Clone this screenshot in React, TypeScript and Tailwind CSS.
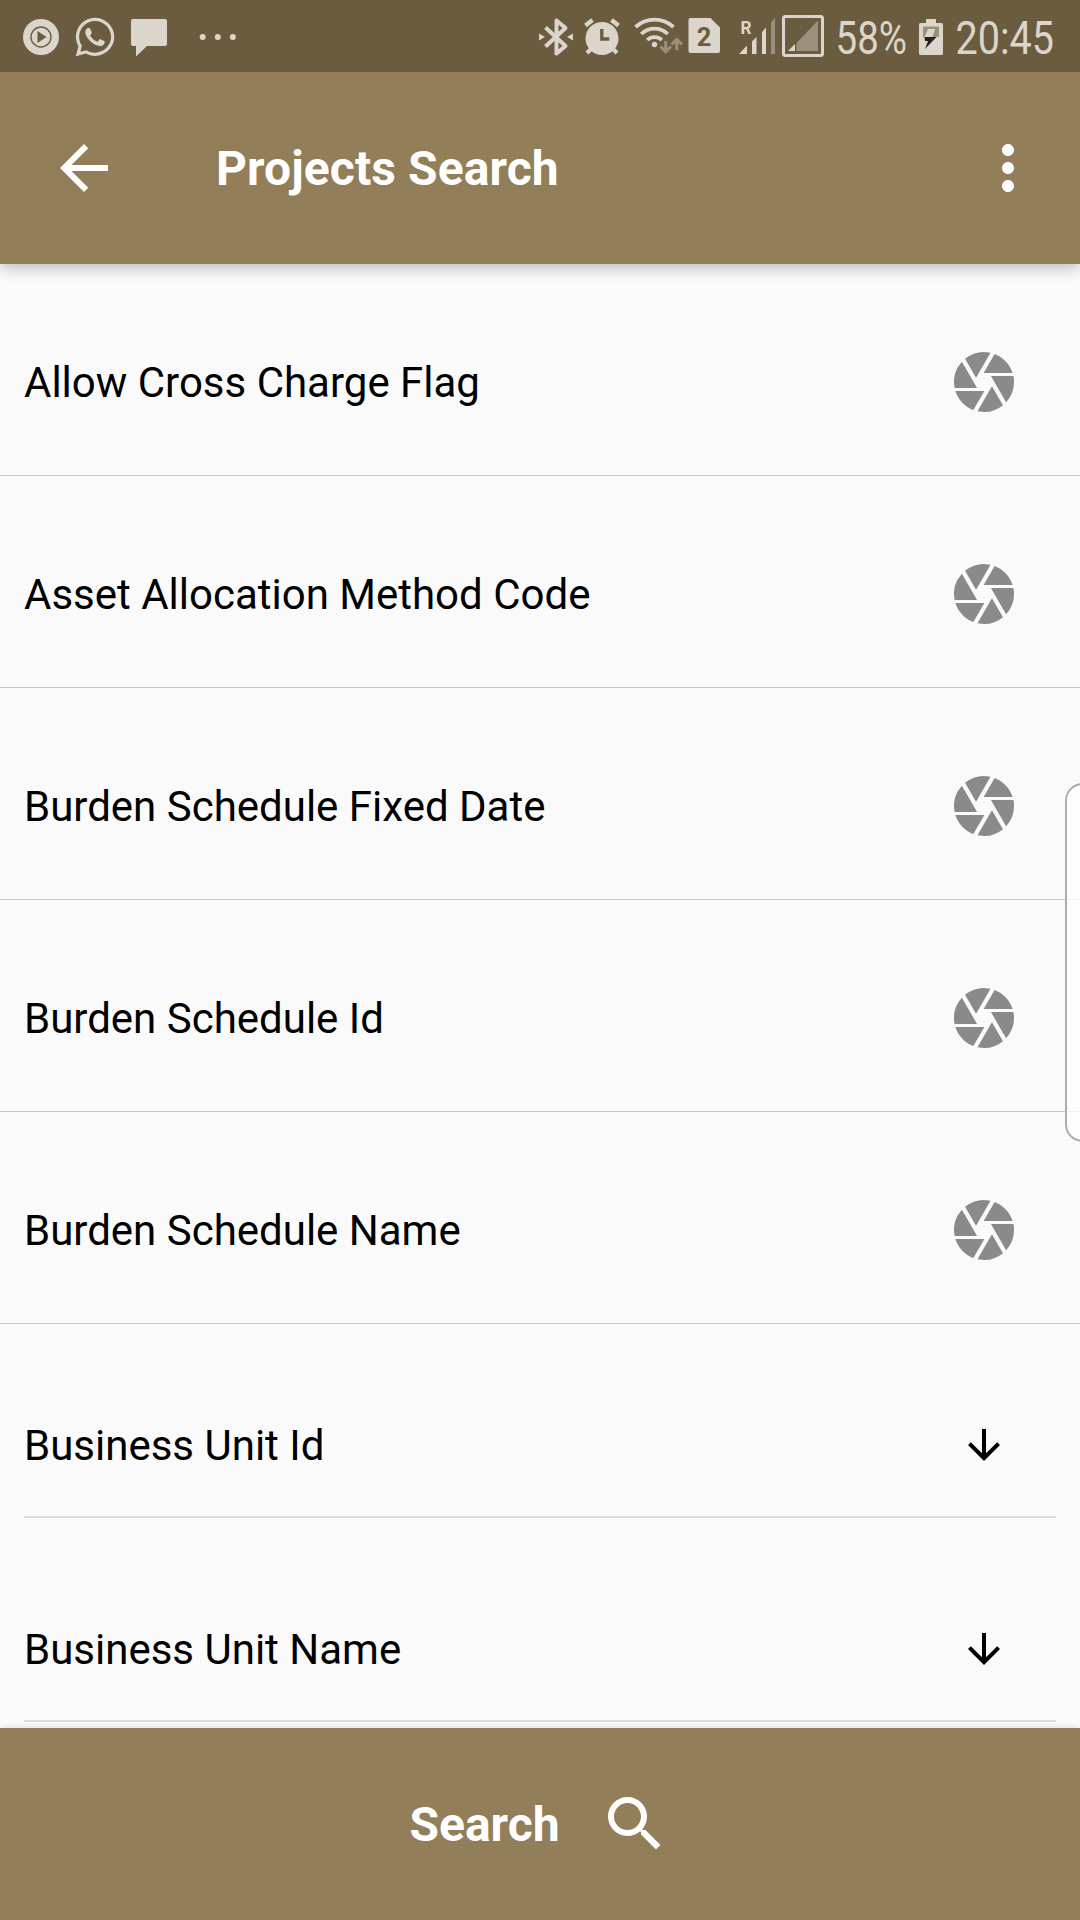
import type { ReactNode } from "react";
import { FaWhatsapp } from "react-icons/fa";
import { MdArrowBack, MdArrowDownward, MdCamera, MdMoreVert, MdSearch } from "react-icons/md";

const LOOKUP_FIELDS = [
  "Allow Cross Charge Flag",
  "Asset Allocation Method Code",
  "Burden Schedule Fixed Date",
  "Burden Schedule Id",
  "Burden Schedule Name",
];

const DROPDOWN_FIELDS = ["Business Unit Id", "Business Unit Name"];

// Full-height slot of the status bar; x is the slot's offset in the bar's drawing space.
function Glyph({ x, w, children }: { x: number; w: number; children: ReactNode }) {
  return (
    <svg width={w} height={72} viewBox={`${x} 0 ${w} 72`} fill="currentColor" className="block shrink-0 overflow-visible">
      {children}
    </svg>
  );
}

function StatusBar() {
  return (
    <div className="relative z-20 flex h-[72px] shrink-0 items-center justify-between bg-[#6b5c3f] pl-[20px] pr-[20px] text-[#dbd5cb]">
      <div className="flex items-center">
        <Glyph x={20} w={55}>
          <circle cx="41" cy="37" r="18" />
          <circle cx="41" cy="37" r="10" fill="none" stroke="#6b5c3f" strokeWidth="1.4" />
          <path d="M37.5 31v12l9-6z" fill="#6b5c3f" />
        </Glyph>
        <FaWhatsapp className="mt-[2px] h-[44px] w-[40px] shrink-0" />
        <Glyph x={115} w={130}>
          <path d="M133 19h32a2 2 0 0 1 2 2v23a2 2 0 0 1-2 2h-18l-11 10.500v-10.500h-3a2 2 0 0 1-2-2V21a2 2 0 0 1 2-2z" />
          <circle cx="202.700" cy="37" r="3" />
          <circle cx="217.800" cy="37" r="3" />
          <circle cx="232.800" cy="37" r="3" />
        </Glyph>
      </div>
      <div className="flex items-center">
        <Glyph x={536} w={44}>
          <path d="M545.500 27.500L565.500 46L556.500 53.500V20.500L565.500 28L545.500 46.500" fill="none" stroke="currentColor" strokeWidth="4" strokeLinejoin="round" />
          <path d="M539 33.500l6 3.500-6 3.500zM573 33.500l-6 3.500 6 3.500z" />
        </Glyph>
        <Glyph x={580} w={50}>
          <circle cx="602" cy="38.500" r="16.500" />
          <path d="M585.500 25.500l7-5.500M618.500 25.500l-7-5.500" stroke="currentColor" strokeWidth="4.200" />
          <path d="M592 48l-5 5M612 48l5 5" stroke="currentColor" strokeWidth="4.200" />
          <path d="M601.800 29v10h7.500" fill="none" stroke="#6b5c3f" strokeWidth="3.300" />
        </Glyph>
        <Glyph x={630} w={56}>
          <g fill="none" stroke="currentColor" strokeWidth="3.800">
            <path d="M635.500 27a28 28 0 0 1 38 0" />
            <path d="M641.300 34a19 19 0 0 1 26.400 0" />
            <path d="M647.200 40a10.500 10.500 0 0 1 14.600 0" />
          </g>
          <circle cx="654.500" cy="44.500" r="2.700" />
          <path d="M665.700 41v10M660.500 46.500l5.200 5.200 5.200-5.200M676.800 50V40M671.600 44.500l5.200-5.200 5.200 5.200" fill="none" stroke="#9b907b" strokeWidth="3" />
        </Glyph>
        <Glyph x={686} w={44}>
          <path d="M690.500 18h20l9.500 9.500v23.500a2 2 0 0 1-2 2h-27.500a2 2 0 0 1-2-2V20a2 2 0 0 1 2-2z" />
          <text x="704" y="46" textAnchor="middle" fontFamily="Roboto" fontWeight="700" fontSize="25.500" fill="#6b5c3f">2</text>
        </Glyph>
        <Glyph x={730} w={50}>
          <text x="740.500" y="34" fontFamily="Roboto" fontWeight="700" fontSize="18" textLength="11" lengthAdjust="spacingAndGlyphs">R</text>
          <path d="M739 54l8-8.500v8.500zM752 54V41.500l4.500-4.500v17zM762 54V32l4-4.500v26.500z" />
          <path d="M771 54V22.500l4-4.500v36z" fill="#9b907b" />
        </Glyph>
        <Glyph x={780} w={50}>
          <rect x="783.500" y="16.500" width="39" height="39" rx="2" fill="none" stroke="currentColor" strokeWidth="3" />
          <path d="M796.500 51V43l21.500-22.500v30.500z" fill="#9b907b" />
          <path d="M788 51l7-7v7z" />
        </Glyph>
        <Glyph x={830} w={84}>
          <text x="835.500" y="54" fontFamily="Roboto" fontSize="45.500" textLength="71.500" lengthAdjust="spacingAndGlyphs">58%</text>
        </Glyph>
        <Glyph x={914} w={36}>
          <path d="M926 19h10v4h5.500a1.500 1.500 0 0 1 1.500 1.500v29a1.500 1.500 0 0 1-1.500 1.500h-21a1.500 1.500 0 0 1-1.500-1.500v-29a1.500 1.500 0 0 1 1.500-1.500h5.500z" />
          <path d="M923 26.500h16v10.500h-16z" fill="#9b907b" />
          <path d="M928 29h7l-2.500 8h-8z" />
          <path d="M924.500 37h12l-11.500 12 3-8h-3z" fill="#231f20" />
        </Glyph>
        <Glyph x={950} w={110}>
          <text x="955.500" y="54" fontFamily="Roboto" fontSize="45.500" textLength="98.500" lengthAdjust="spacingAndGlyphs">20:45</text>
        </Glyph>
      </div>
    </div>
  );
}

function Header() {
  return (
    <header className="relative z-10 flex h-[192px] shrink-0 items-center bg-[#927e58] pl-12 pr-9 text-white shadow-[0_4px_14px_rgba(0,0,0,0.26)]">
      <MdArrowBack className="size-[72px]" />
      <h1 className="ml-24 flex-1 pt-[2px] text-[48px] leading-[56px] font-bold tracking-[0.1px]">Projects Search</h1>
      <MdMoreVert className="size-[72px]" />
    </header>
  );
}

export default function App() {
  return (
    <div className="relative flex h-[1920px] w-[1080px] flex-col overflow-hidden bg-[#fafafa] font-['Roboto',sans-serif]">
      <StatusBar />
      <Header />
      <main className="flex flex-1 flex-col text-[42px] leading-[50px] text-black">
        {LOOKUP_FIELDS.map((label) => (
          <div key={label} className="flex h-[212px] items-center justify-between border-b border-[#c0c8cc] pt-6 pr-[60px] pl-6">
            <span className="pt-[2px]">{label}</span>
            <MdCamera className="size-[72px] text-[#8a8a8a]" />
          </div>
        ))}
        <div className="-mt-[10px] px-6">
          {DROPDOWN_FIELDS.map((label) => (
            <div key={label} className="flex h-[204px] items-end justify-between border-b-2 border-[#d6dce0] pr-12 pb-[45px]">
              <span>{label}</span>
              <MdArrowDownward className="mb-[2px] size-12" />
            </div>
          ))}
        </div>
      </main>
      <footer className="flex h-[192px] shrink-0 items-center justify-center gap-[39px] bg-[#927e58] text-white shadow-[0_0_6px_rgba(0,0,0,0.15)]">
        <span className="pt-[2px] text-[48px] leading-[56px] font-bold">Search</span>
        <MdSearch className="size-[72px]" />
      </footer>
      <div className="absolute top-[783px] -right-[20px] h-[359px] w-[35px] rounded-[20px] border-2 border-[#adadad] bg-white/75" />
    </div>
  );
}
